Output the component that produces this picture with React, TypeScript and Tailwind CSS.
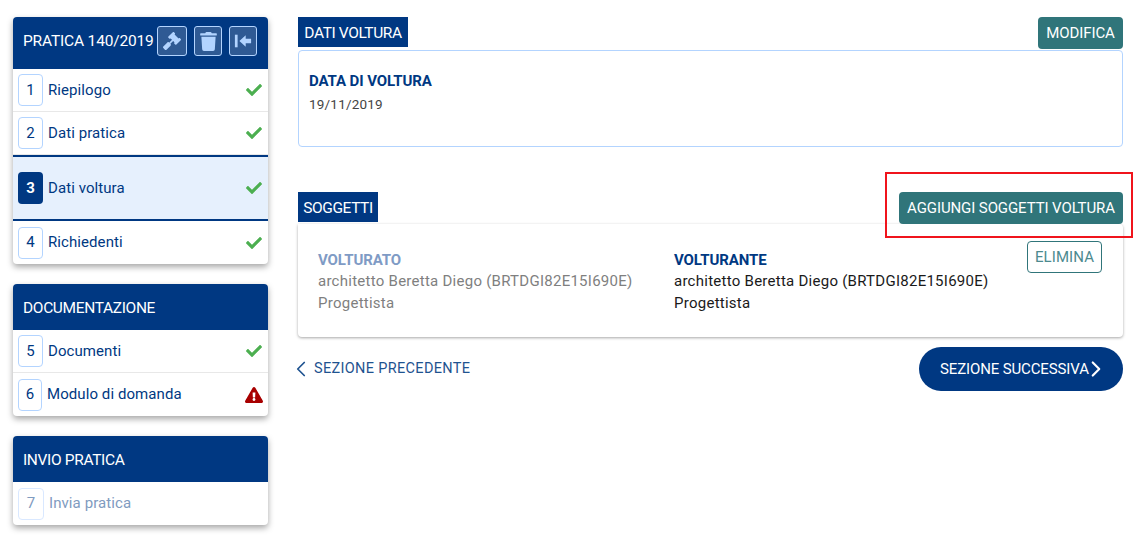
import { FaCheck, FaExclamationTriangle, FaGavel, FaTrash } from 'react-icons/fa'
import { LuChevronLeft, LuChevronRight } from 'react-icons/lu'

type Step = { n: number; label: string; status?: 'ok' | 'warn'; active?: boolean; disabled?: boolean; h: string; w?: string; last?: boolean }

const pratica: Step[] = [
  { n: 1, label: 'Riepilogo', status: 'ok', h: 'h-[43px]' },
  { n: 2, label: 'Dati pratica', status: 'ok', h: 'h-[43px]' },
  { n: 3, label: 'Dati voltura', status: 'ok', active: true, h: 'h-[66px]' },
  { n: 4, label: 'Richiedenti', status: 'ok', h: 'h-[43px]', last: true },
]

const documentazione: Step[] = [
  { n: 5, label: 'Documenti', status: 'ok', h: 'h-[43px]' },
  { n: 6, label: 'Modulo di domanda', status: 'warn', h: 'h-[43px]', w: 'w-[24px]', last: true },
]

const invio: Step[] = [{ n: 7, label: 'Invia pratica', disabled: true, h: 'h-[43px]', w: 'w-[26px]', last: true }]

function StepRow({ step }: { step: Step }) {
  let rowClass = 'border-b border-[#e8e8e8]'
  if (step.active) rowClass = 'border-y-2 border-[#003882] bg-[#e6f0fd]'
  if (step.last) rowClass = ''

  let badgeClass = 'border border-[#b3d4ff] bg-white text-[#003882]'
  if (step.active) badgeClass = 'bg-[#003882] text-white font-bold'
  if (step.disabled) badgeClass = 'border border-[#d9e8ff] bg-white text-[#7f9bc0]'

  return (
    <div className={`flex items-center pl-[5px] pr-[5px] ${step.h} ${rowClass}`}>
      <div className={`flex h-8 shrink-0 items-center justify-center rounded text-[15px] ${step.w ?? 'w-[25px]'} ${badgeClass}`}>{step.n}</div>
      <span className={`ml-[5px] flex-1 text-[15px] tracking-[0.08px] ${step.disabled ? 'text-[#7f9bc0]' : 'text-[#003882]'}`}>{step.label}</span>
      {step.status === 'ok' && <FaCheck className="mr-px text-[16px] text-[#4caf50]" />}
      {step.status === 'warn' && <FaExclamationTriangle className="text-[18px] text-[#a80000]" />}
    </div>
  )
}

function SideCard({ title, steps, tall }: { title: string; steps: Step[]; tall?: boolean }) {
  return (
    <div className="overflow-hidden rounded bg-white shadow-[0_3px_6px_rgba(0,0,0,0.35)]">
      <div className={`flex items-center bg-[#003882] pl-[10px] text-[15.5px] text-white ${tall ? 'h-[52px] tracking-[-0.17px]' : 'h-[46px] tracking-[-0.35px]'}`}>
        <span className={tall ? 'mb-[2px] w-[134px]' : 'mt-[3px]'}>{title}</span>
        {tall && (
          <div className="mb-[4px] flex items-center gap-[7px]">
            <IconBox w="w-[30px]"><FaGavel className="text-[18px]" /></IconBox>
            <IconBox w="w-[28px]"><FaTrash className="text-[19px]" /></IconBox>
            <IconBox w="w-[28px]">
              <svg viewBox="0 0 20 20" className="h-[18px] w-[18px]" fill="currentColor">
                <rect x="1" y="3" width="3" height="14" />
                <path d="M6 10l7-6.5V7.5h6v5h-6v4z" />
              </svg>
            </IconBox>
          </div>
        )}
      </div>
      {steps.map((s) => (
        <StepRow key={s.n} step={s} />
      ))}
    </div>
  )
}

function IconBox({ w, children }: { w: string; children: React.ReactNode }) {
  return (
    <div className={`flex h-[30px] ${w} items-center justify-center rounded-[3px] border border-[#b3d4ff] bg-[#2f5a94] text-[#b3d4ff]`}>
      {children}
    </div>
  )
}

function Person({ role, muted }: { role: string; muted?: boolean }) {
  return (
    <div className={`w-[356px] shrink-0 text-[15px] leading-[22px] tracking-[0.26px] ${muted ? 'text-[#7f7f7f]' : 'text-[#1a1a1a]'}`}>
      <div className={`font-bold leading-[19px] tracking-[-0.1px] ${muted ? 'text-[#7f9bc5]' : 'text-[#003882]'}`}>{role}</div>
      <div>architetto Beretta Diego (BRTDGI82E15I690E)</div>
      <div>Progettista</div>
    </div>
  )
}

export default function App() {
  return (
    <div className="flex h-[539px] w-[1137px] overflow-hidden bg-white font-['Roboto',sans-serif]">
      <aside className="ml-[13px] mt-[17px] flex w-[255px] shrink-0 flex-col gap-5">
        <SideCard title="PRATICA 140/2019" steps={pratica} tall />
        <SideCard title="DOCUMENTAZIONE" steps={documentazione} />
        <SideCard title="INVIO PRATICA" steps={invio} />
      </aside>

      <main className="ml-[30px] mt-[17px] w-[825px] shrink-0">
        <div className="flex items-start justify-between">
          <h2 className="flex h-[30px] w-[110px] items-center justify-center bg-[#003882] pt-[3px] text-[15.5px] tracking-[-0.4px] text-white">DATI VOLTURA</h2>
          <button className="h-8 w-[85px] rounded bg-[#30757a] text-[15px] tracking-[-0.1px] text-white">MODIFICA</button>
        </div>
        <div className="mt-px h-[97px] rounded border border-[#b3d4ff] px-[10px] pt-[20px]">
          <div className="text-[15px] font-bold leading-5 tracking-[-0.1px] text-[#003882]">DATA DI VOLTURA</div>
          <div className="mt-[3px] text-[13.5px] leading-5 tracking-[0.2px] text-[#444]">19/11/2019</div>
        </div>

        <div className="mt-[45px] flex items-start justify-between">
          <h2 className="flex h-[30px] w-[80px] items-center justify-center bg-[#003882] pt-[3px] text-[15.5px] tracking-[-0.4px] text-white">SOGGETTI</h2>
          <div className="relative">
            <button className="h-8 w-[224px] rounded bg-[#30757a] text-[15px] tracking-[-0.1px] text-white">AGGIUNGI SOGGETTI VOLTURA</button>
            <div className="absolute -left-[14px] -top-[20px] z-10 h-[66px] w-[248px] border-2 border-[#f0141c]" />
          </div>
        </div>
        <div className="flex h-[113px] items-start rounded-b rounded-tr bg-white pl-[20px] pt-[27px] shadow-[0_1px_3px_rgba(0,0,0,0.35)]">
          <Person role="VOLTURATO" muted />
          <Person role="VOLTURANTE" />
          <button className="-mt-[10px] ml-[-3px] h-8 w-[75px] rounded border border-[#30757a] pt-[1px] text-[15px] tracking-[0.1px] text-[#4c8a8f]">ELIMINA</button>
        </div>

        <div className="mt-[10px] flex items-center justify-between">
          <a className="flex items-center text-[14.5px] tracking-[0.33px] text-[#1f5390]">
            <LuChevronLeft className="-ml-[10px] h-[26px] w-[26px]" strokeWidth={1.6} />
            <span>SEZIONE PRECEDENTE</span>
          </a>
          <button className="flex h-[44px] w-[204px] items-center rounded-full bg-[#003882] pl-[21px] text-[15px] tracking-[-0.13px] text-white">
            SEZIONE SUCCESSIVA
            <LuChevronRight className="-ml-[6px] h-[26px] w-[26px]" strokeWidth={2} />
          </button>
        </div>
      </main>
    </div>
  )
}
